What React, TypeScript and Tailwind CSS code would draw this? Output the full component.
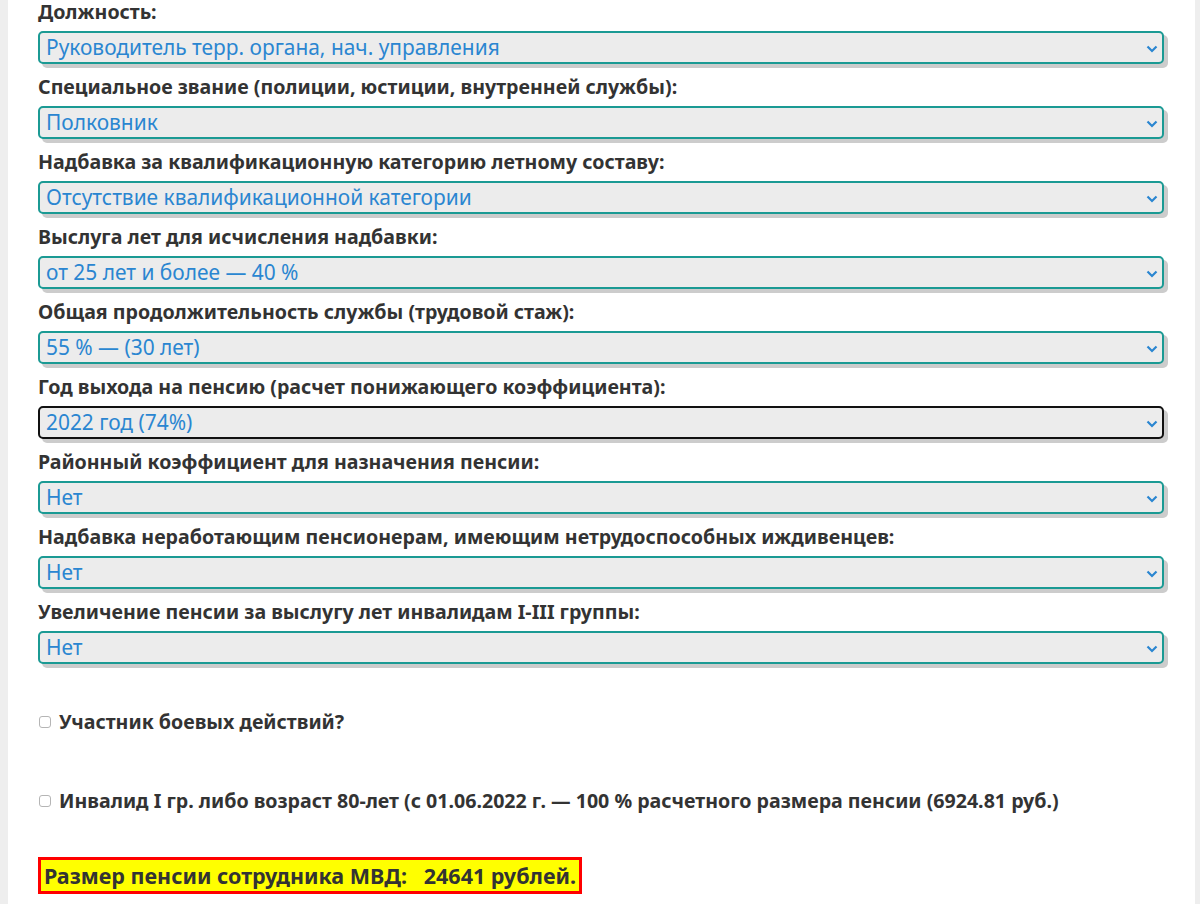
import React from "react";

const rows: [string, string, boolean?][] = [
  ["Должность:", "Руководитель терр. органа, нач. управления"],
  ["Специальное звание (полиции, юстиции, внутренней службы):", "Полковник"],
  ["Надбавка за квалификационную категорию летному составу:", "Отсутствие квалификационной категории"],
  ["Выслуга лет для исчисления надбавки:", "от 25 лет и более — 40 %"],
  ["Общая продолжительность службы (трудовой стаж):", "55 % — (30 лет)"],
  ["Год выхода на пенсию (расчет понижающего коэффициента):", "2022 год (74%)", true],
  ["Районный коэффициент для назначения пенсии:", "Нет"],
  ["Надбавка неработающим пенсионерам, имеющим нетрудоспособных иждивенцев:", "Нет"],
  ["Увеличение пенсии за выслугу лет инвалидам I-III группы:", "Нет"],
];

function Chevron() {
  return (
    <svg width="12" height="8" viewBox="0 0 12 8" className="absolute right-[4px] top-[12px]">
      <path d="M1.5 1.5 L6 6 L10.5 1.5" fill="none" stroke="#2a86d1" strokeWidth="2.2" />
    </svg>
  );
}

export default function App() {
  return (
    <div className="w-[1200px] h-[904px] bg-[#eeeeee] overflow-hidden" style={{ fontFamily: '"Noto Sans", "Open Sans", sans-serif' }}>
      <div className="ml-[8px] w-[1187px] h-full bg-white pl-[30px] pr-[31px]">
        {rows.map(([label, value, focused], i) => (
          <div key={i} className="mb-[11px]">
            <div className="h-[24px] leading-[24px] text-[19.6px] font-bold text-[#333333] mb-[7px] whitespace-nowrap">
              {label}
            </div>
            <div
              className={
                "relative h-[33px] rounded-[5px] bg-[#ececec] border-2 shadow-[4px_4px_0_#cccccc] " +
                (focused ? "border-[#111111]" : "border-[#1b9a94]")
              }
            >
              <div className="pl-[6px] leading-[29px] text-[20.9px] text-[#2a86d1] whitespace-nowrap">{value}</div>
              <Chevron />
            </div>
          </div>
        ))}
        <div className="h-[35px]" />
        <label className="flex items-center h-[24px] text-[19.6px] font-bold text-[#333333] whitespace-nowrap">
          <span className="inline-block w-[12px] h-[12px] border border-[#b5b5b5] rounded-[3px] bg-white mr-[8px] ml-[1px]" />
          Участник боевых действий?
        </label>
        <div className="h-[55px]" />
        <label className="flex items-center h-[24px] text-[19.6px] font-bold text-[#333333] whitespace-nowrap">
          <span className="inline-block w-[12px] h-[12px] border border-[#b5b5b5] rounded-[3px] bg-white mr-[8px] ml-[1px]" />
          Инвалид I гр. либо возраст 80-лет (с 01.06.2022 г. — 100 % расчетного размера пенсии (6924.81 руб.)
        </label>
        <div className="h-[44px]" />
        <div className="inline-block border-[3px] border-[#ff0000] bg-[#ffff00] px-[3px] h-[37px] leading-[31px] text-[21.5px] font-bold text-[#333333] whitespace-nowrap">
          Размер пенсии сотрудника МВД:&nbsp;&nbsp; 24641 рублей.
        </div>
      </div>
    </div>
  );
}
